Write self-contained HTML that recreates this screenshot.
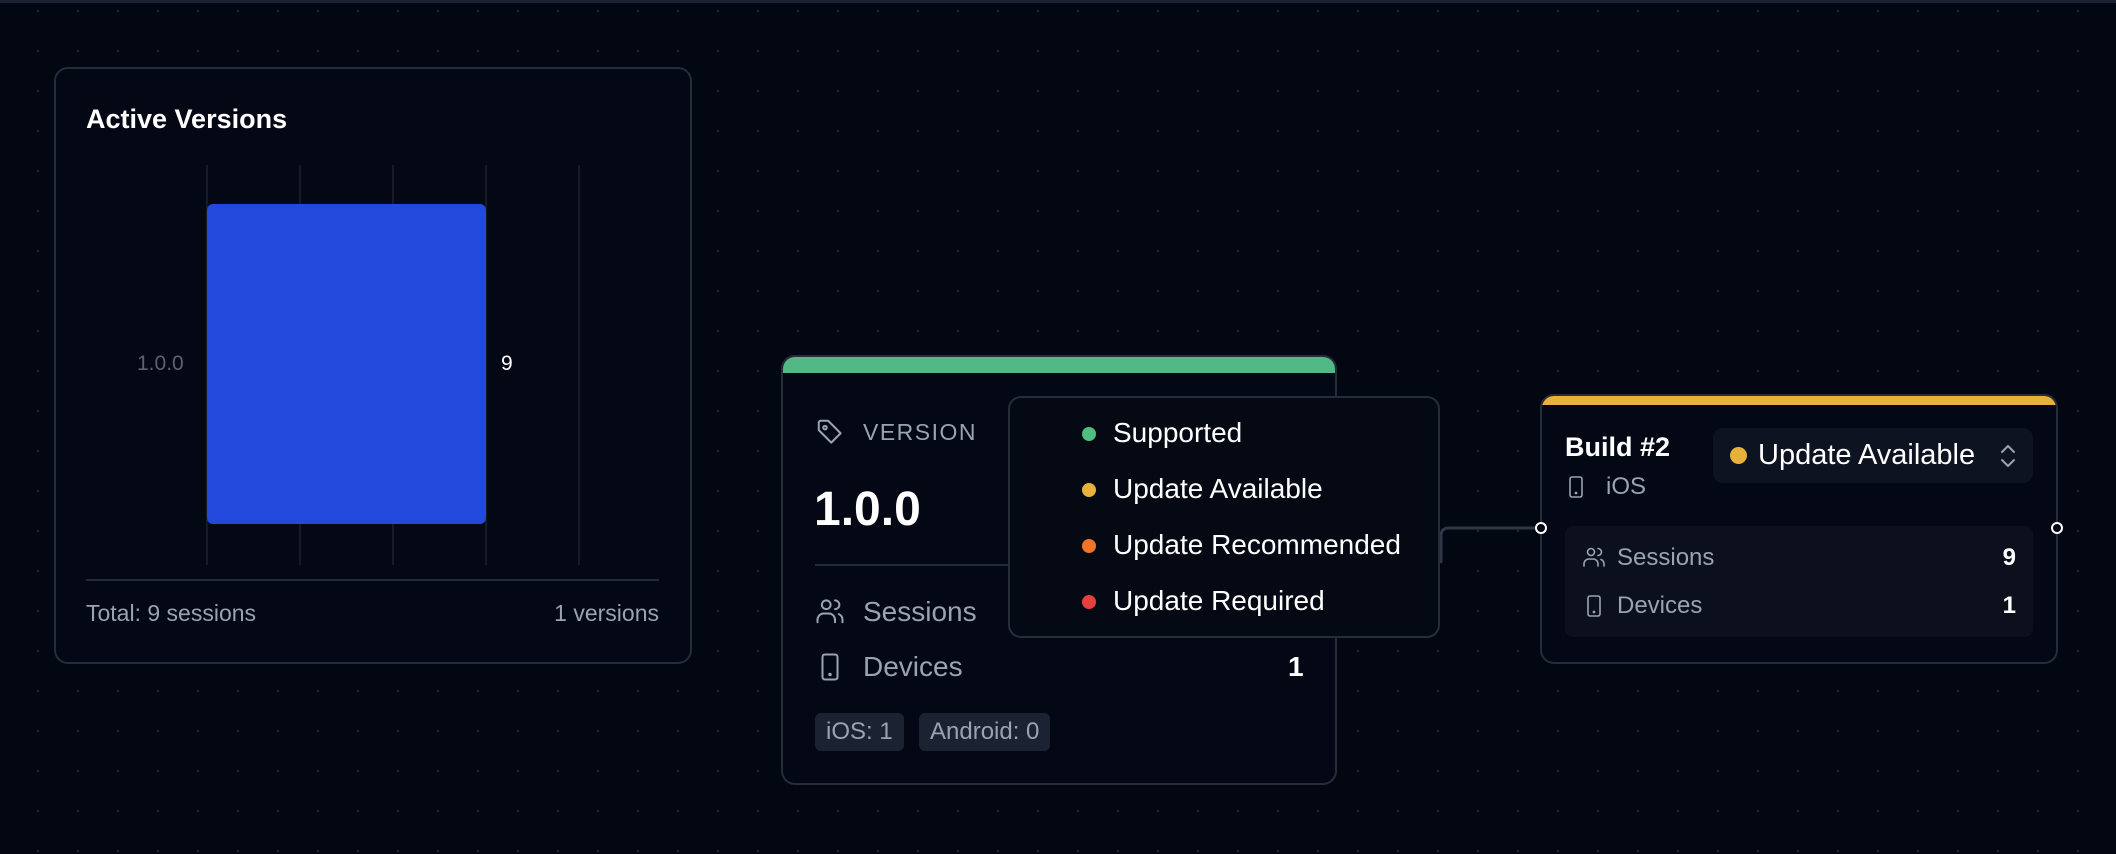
<!DOCTYPE html>
<html><head><meta charset="utf-8">
<style>
*{margin:0;padding:0;box-sizing:border-box}
html,body{width:2116px;height:854px;overflow:hidden}
body{background:#030712;font-family:"Liberation Sans",sans-serif;position:relative;
background-image:radial-gradient(circle,#1c222e 1.1px,transparent 1.5px);background-size:40px 40px;background-position:18px -9px}
.topline{position:absolute;left:0;top:0;width:2116px;height:3px;background:#1a2130}
.abs{position:absolute}
.card{position:absolute;background:#030814;border:2px solid #252c3a;border-radius:14px}
.t{position:absolute;white-space:nowrap;line-height:1}
</style></head><body>
<div class="topline"></div>

<!-- Active versions card -->
<div class="card" style="left:54px;top:67px;width:638px;height:597px"></div>
<div class="t" style="left:86px;top:106px;font-size:27px;font-weight:bold;color:#fff">Active Versions</div>
<div class="abs" style="left:206px;top:165px;width:2px;height:400px;background:#151b27"></div>
<div class="abs" style="left:299px;top:165px;width:2px;height:400px;background:#151b27"></div>
<div class="abs" style="left:392px;top:165px;width:2px;height:400px;background:#151b27"></div>
<div class="abs" style="left:485px;top:165px;width:2px;height:400px;background:#151b27"></div>
<div class="abs" style="left:578px;top:165px;width:2px;height:400px;background:#151b27"></div>
<div class="abs" style="left:207px;top:204px;width:279px;height:320px;background:#2348dc;border-radius:6px"></div>
<div class="t" style="left:137px;top:353px;font-size:21px;color:#5b6170">1.0.0</div>
<div class="t" style="left:501px;top:353px;font-size:21px;color:#fff">9</div>
<div class="abs" style="left:86px;top:579px;width:573px;height:2px;background:#232a37"></div>
<div class="t" style="left:86px;top:602px;font-size:23px;color:#9aa3b2">Total: 9 sessions</div>
<div class="t" style="right:1457px;top:602px;font-size:23px;color:#9aa3b2">1 versions</div>

<!-- connector -->
<svg class="abs" style="left:0;top:0" width="2116" height="854">
<path d="M1441,563 L1441,536 Q1441,528 1449,528 L1541,528" stroke="#2f3746" stroke-width="3" fill="none"/>
</svg>

<!-- Version card -->
<div class="card" style="left:781px;top:355px;width:556px;height:430px;overflow:hidden">
  <div style="height:16px;background:#52b886"></div>
</div>
<svg class="abs" style="left:815px;top:417px" width="30" height="30" viewBox="0 0 24 24" fill="none" stroke="#9aa3b2" stroke-width="1.6" stroke-linejoin="round"><path d="M3 4v6.5l10 10 7.5-7.5-10-10H4z"/><circle cx="8" cy="8.5" r="1.4"/></svg>
<div class="t" style="left:863px;top:421px;font-size:23px;color:#9aa3b2;letter-spacing:1.5px">VERSION</div>
<div class="t" style="left:814px;top:486px;font-size:48px;font-weight:bold;color:#fff">1.0.0</div>
<div class="abs" style="left:815px;top:564px;width:500px;height:2px;background:#232a37"></div>
<svg class="abs" style="left:815px;top:596px" width="30" height="30" viewBox="0 0 24 24" fill="none" stroke="#9aa3b2" stroke-width="1.6" stroke-linecap="round"><circle cx="9" cy="7" r="3.5"/><path d="M2 21v-2a5 5 0 0 1 5-5h4a5 5 0 0 1 5 5v2"/><path d="M16 3.5a3.5 3.5 0 0 1 0 7"/><path d="M22 21v-2a5 5 0 0 0-3-4.5"/></svg>
<div class="t" style="left:863px;top:598px;font-size:28px;color:#9aa3b2">Sessions</div>
<svg class="abs" style="left:815px;top:651px" width="30" height="32" viewBox="0 0 24 24" fill="none" stroke="#9aa3b2" stroke-width="1.6"><rect x="6" y="2" width="12" height="20" rx="2"/><circle cx="12" cy="18" r="0.6" fill="#9aa3b2"/></svg>
<div class="t" style="left:863px;top:653px;font-size:28px;color:#9aa3b2">Devices</div>
<div class="t" style="left:1288px;top:653px;font-size:28px;font-weight:bold;color:#fff">1</div>
<div class="t" style="left:815px;top:713px;height:38px;padding:7px 11px;border-radius:6px;background:#1b2231;font-size:24px;color:#9aa3b2">iOS: 1</div>
<div class="t" style="left:919px;top:713px;height:38px;padding:7px 11px;border-radius:6px;background:#1b2231;font-size:24px;color:#9aa3b2">Android: 0</div>

<!-- dropdown -->
<div class="abs" style="left:1008px;top:396px;width:432px;height:242px;background:#040914;border:2px solid #262d3b;border-radius:13px"></div>
<div class="abs" style="left:1082px;top:427px;width:14px;height:14px;border-radius:50%;background:#4fbf7f"></div>
<div class="t" style="left:1113px;top:419px;font-size:28px;color:#fff">Supported</div>
<div class="abs" style="left:1082px;top:483px;width:14px;height:14px;border-radius:50%;background:#e8b23a"></div>
<div class="t" style="left:1113px;top:475px;font-size:28px;color:#fff">Update Available</div>
<div class="abs" style="left:1082px;top:539px;width:14px;height:14px;border-radius:50%;background:#ef7428"></div>
<div class="t" style="left:1113px;top:531px;font-size:28px;color:#fff">Update Recommended</div>
<div class="abs" style="left:1082px;top:595px;width:14px;height:14px;border-radius:50%;background:#e5403e"></div>
<div class="t" style="left:1113px;top:587px;font-size:28px;color:#fff">Update Required</div>

<!-- Build card -->
<div class="card" style="left:1540px;top:394px;width:518px;height:270px;overflow:hidden">
  <div style="height:9px;background:#e8b23a"></div>
</div>
<div class="t" style="left:1565px;top:434px;font-size:27px;font-weight:bold;color:#fff">Build #2</div>
<svg class="abs" style="left:1564px;top:474px" width="24" height="26" viewBox="0 0 24 24" fill="none" stroke="#9aa3b2" stroke-width="1.6"><rect x="6" y="2" width="12" height="20" rx="2"/><circle cx="12" cy="18" r="0.6" fill="#9aa3b2"/></svg>
<div class="t" style="left:1606px;top:475px;font-size:24px;color:#9aa3b2">iOS</div>
<div class="abs" style="left:1713px;top:428px;width:320px;height:55px;background:#0e1321;border-radius:10px"></div>
<div class="abs" style="left:1730px;top:447px;width:17px;height:17px;border-radius:50%;background:#e8b23a"></div>
<div class="t" style="left:1758px;top:441px;font-size:29px;color:#fff">Update Available</div>
<svg class="abs" style="left:1998px;top:442px" width="20" height="28" viewBox="0 0 20 28" fill="none" stroke="#9aa3b2" stroke-width="2" stroke-linecap="round" stroke-linejoin="round"><path d="M4 10l6-6 6 6M4 18l6 6 6-6"/></svg>
<div class="abs" style="left:1565px;top:526px;width:468px;height:111px;background:#0b101c;border-radius:8px"></div>
<svg class="abs" style="left:1582px;top:545px" width="24" height="24" viewBox="0 0 24 24" fill="none" stroke="#9aa3b2" stroke-width="1.6" stroke-linecap="round"><circle cx="9" cy="7" r="3.5"/><path d="M2 21v-2a5 5 0 0 1 5-5h4a5 5 0 0 1 5 5v2"/><path d="M16 3.5a3.5 3.5 0 0 1 0 7"/><path d="M22 21v-2a5 5 0 0 0-3-4.5"/></svg>
<div class="t" style="left:1617px;top:546px;font-size:24px;color:#9aa3b2">Sessions</div>
<div class="t" style="right:100px;top:546px;font-size:24px;font-weight:bold;color:#fff">9</div>
<svg class="abs" style="left:1582px;top:593px" width="24" height="26" viewBox="0 0 24 24" fill="none" stroke="#9aa3b2" stroke-width="1.6"><rect x="6" y="2" width="12" height="20" rx="2"/><circle cx="12" cy="18" r="0.6" fill="#9aa3b2"/></svg>
<div class="t" style="left:1617px;top:594px;font-size:24px;color:#9aa3b2">Devices</div>
<div class="t" style="right:100px;top:594px;font-size:24px;font-weight:bold;color:#fff">1</div>

<svg class="abs" style="left:0;top:0" width="2116" height="854">
<circle cx="1541" cy="528" r="5" fill="#030712" stroke="#fff" stroke-width="2"/>
<circle cx="2057" cy="528" r="5" fill="#030712" stroke="#fff" stroke-width="2"/>
</svg>
</body></html>
